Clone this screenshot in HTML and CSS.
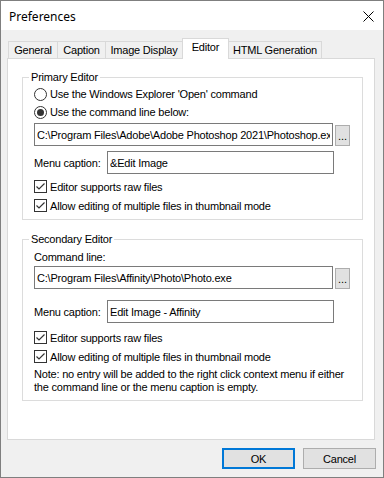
FILE: index.html
```html
<!DOCTYPE html>
<html lang="en">
<head>
    <meta charset="UTF-8">
    <meta name="viewport" content="width=device-width, initial-scale=1.0">
    <title>Preferences</title>
    <link rel="stylesheet" href="styles.css">
</head>
<body>
    <div class="window">
        <div class="titlebar">
            <span class="title">Preferences</span>
            <svg class="close" width="11" height="11" viewBox="0 0 11 11">
                <path d="M0.5 0.5 L10.5 10.5 M10.5 0.5 L0.5 10.5" stroke="#000" stroke-width="1" fill="none"/>
            </svg>
        </div>

        <div class="content">
            <div class="tabs">
                <div class="tab tab-general">General</div>
                <div class="tab tab-caption">Caption</div>
                <div class="tab tab-display">Image Display</div>
                <div class="tab tab-editor selected">Editor</div>
                <div class="tab tab-html">HTML Generation</div>
            </div>

            <div class="panel">
                <fieldset class="group group-primary">
                    <legend>Primary Editor</legend>
                    <div class="option">
                        <span class="radio"></span>
                        <span>Use the Windows Explorer 'Open' command</span>
                    </div>
                    <div class="option">
                        <span class="radio checked"></span>
                        <span>Use the command line below:</span>
                    </div>
                    <div class="path-row">
                        <input type="text" class="field" value="C:\Program Files\Adobe\Adobe Photoshop 2021\Photoshop.exe">
                        <button class="browse">...</button>
                    </div>
                    <div class="caption-row">
                        <label>Menu caption:</label>
                        <input type="text" class="field" value="&amp;Edit Image">
                    </div>
                    <div class="check-row first">
                        <span class="checkbox"><svg width="11" height="11" viewBox="0 0 11 11"><path d="M1.5 5.5 L4 8 L9.5 2.5" stroke="#333" stroke-width="1.2" fill="none"/></svg></span>
                        <span>Editor supports raw files</span>
                    </div>
                    <div class="check-row">
                        <span class="checkbox"><svg width="11" height="11" viewBox="0 0 11 11"><path d="M1.5 5.5 L4 8 L9.5 2.5" stroke="#333" stroke-width="1.2" fill="none"/></svg></span>
                        <span>Allow editing of multiple files in thumbnail mode</span>
                    </div>
                </fieldset>

                <fieldset class="group group-secondary">
                    <legend>Secondary Editor</legend>
                    <div class="label-row">Command line:</div>
                    <div class="path-row">
                        <input type="text" class="field" value="C:\Program Files\Affinity\Photo\Photo.exe">
                        <button class="browse">...</button>
                    </div>
                    <div class="caption-row">
                        <label>Menu caption:</label>
                        <input type="text" class="field" value="Edit Image - Affinity">
                    </div>
                    <div class="check-row first">
                        <span class="checkbox"><svg width="11" height="11" viewBox="0 0 11 11"><path d="M1.5 5.5 L4 8 L9.5 2.5" stroke="#333" stroke-width="1.2" fill="none"/></svg></span>
                        <span>Editor supports raw files</span>
                    </div>
                    <div class="check-row">
                        <span class="checkbox"><svg width="11" height="11" viewBox="0 0 11 11"><path d="M1.5 5.5 L4 8 L9.5 2.5" stroke="#333" stroke-width="1.2" fill="none"/></svg></span>
                        <span>Allow editing of multiple files in thumbnail mode</span>
                    </div>
                    <p class="note">Note: no entry will be added to the right click context menu if either the command line or the menu caption is empty.</p>
                </fieldset>
            </div>

            <div class="buttons">
                <button class="btn default">OK</button>
                <button class="btn">Cancel</button>
            </div>
        </div>
    </div>
</body>
</html>
```

FILE: styles.css
```css
body {
    margin: 0;
    padding: 0;
    font-family: "Liberation Sans", Arial, sans-serif;
    font-size: 11px;
    letter-spacing: -0.2px;
    color: #000;
    background-color: #f0f0f0;
}

.window {
    width: 384px;
    height: 478px;
    box-sizing: border-box;
    border: 1px solid #7f7f7f;
    background-color: #f0f0f0;
}

.titlebar {
    height: 29px;
    display: flex;
    align-items: center;
    justify-content: space-between;
    padding: 0 9px 0 8px;
    background-color: #fff;
}

.title {
    font-family: "Noto Sans", "Liberation Sans", sans-serif;
    font-size: 12px;
    letter-spacing: 0;
    margin-top: 1px;
}

.close {
    display: block;
    margin-top: 1px;
}

.content {
    padding: 8px 7px 0 6px;
}

/* tab strip */
.tabs {
    display: flex;
    align-items: flex-end;
    height: 20px;
    padding-left: 1px;
}

.tab {
    box-sizing: border-box;
    height: 17px;
    margin-right: -1px;
    border: 1px solid #d9d9d9;
    border-bottom: none;
    background-color: #f0f0f0;
    text-align: center;
    line-height: 15px;
    padding-top: 1px;
}

.tab-general { width: 50px; }
.tab-caption { width: 49px; }
.tab-display { width: 78px; }
.tab-editor { width: 47px; }
.tab-html { width: 94px; }

.tab.selected {
    position: relative;
    z-index: 1;
    height: 21px;
    margin-bottom: -1px;
    background-color: #fff;
    line-height: 17px;
    padding-top: 0;
}

.panel {
    box-sizing: border-box;
    width: 368px;
    height: 382px;
    padding: 12px 11px 0 14px;
    background-color: #fff;
    border: 1px solid #d9d9d9;
}

/* group boxes */
.group {
    margin: 0;
    padding: 1px 12px 4px 11px;
    border: 1px solid #dcdcdc;
    min-width: 0;
}

.group legend {
    padding: 0 2px;
    margin-left: -5px;
    line-height: 13px;
}

.group-secondary {
    margin-top: 13px;
    padding-bottom: 6px;
}

.option,
.check-row {
    display: flex;
    align-items: center;
    gap: 3px;
}

.option {
    height: 18px;
}

.check-row {
    height: 19px;
}

.check-row.first {
    margin-top: 3px;
}

.group-secondary .check-row.first {
    margin-top: 5px;
}

.radio {
    box-sizing: border-box;
    width: 13px;
    height: 13px;
    border: 1px solid #333;
    border-radius: 50%;
    display: flex;
    align-items: center;
    justify-content: center;
}

.radio.checked::after {
    content: "";
    width: 7px;
    height: 7px;
    border-radius: 50%;
    background-color: #333;
}

.checkbox {
    box-sizing: border-box;
    width: 13px;
    height: 13px;
    border: 1px solid #333;
    display: flex;
    align-items: center;
    justify-content: center;
}

.checkbox svg {
    display: block;
}

.field {
    box-sizing: border-box;
    height: 23px;
    margin: 0;
    padding: 0 2px;
    border: 1px solid #7a7a7a;
    border-radius: 0;
    font-family: inherit;
    font-size: 11px;
    letter-spacing: -0.2px;
    color: #000;
    background-color: #fff;
    outline: none;
}

.path-row {
    display: flex;
    align-items: center;
    gap: 1px;
    margin-top: 2px;
}

.path-row .field {
    flex: 1;
    min-width: 0;
}

.browse {
    box-sizing: border-box;
    width: 15px;
    height: 21px;
    margin: 1px 0 0 1px;
    padding: 0 0 3px;
    border: 1px solid #adadad;
    background-color: #e1e1e1;
    font-family: inherit;
    font-size: 11px;
    line-height: 11px;
    letter-spacing: 0;
    display: flex;
    align-items: flex-end;
    justify-content: center;
}

.caption-row {
    display: grid;
    grid-template-columns: 73px 227px;
    align-items: center;
    margin-top: 5px;
}

.group-secondary .caption-row {
    margin-top: 11px;
}

.label-row {
    height: 18px;
    line-height: 18px;
    margin-top: 1px;
}

.group-secondary .path-row {
    margin-top: 0;
}

.note {
    margin: 2px 0 0;
    line-height: 13px;
}

/* dialog buttons */
.buttons {
    display: flex;
    justify-content: flex-end;
    gap: 8px;
    margin-top: 8px;
}

.btn {
    box-sizing: border-box;
    width: 73px;
    height: 21px;
    padding: 0;
    border: 1px solid #adadad;
    background-color: #e1e1e1;
    font-family: inherit;
    font-size: 11px;
    letter-spacing: -0.2px;
    color: #000;
}

.btn.default {
    border: 2px solid #0078d7;
}
```
